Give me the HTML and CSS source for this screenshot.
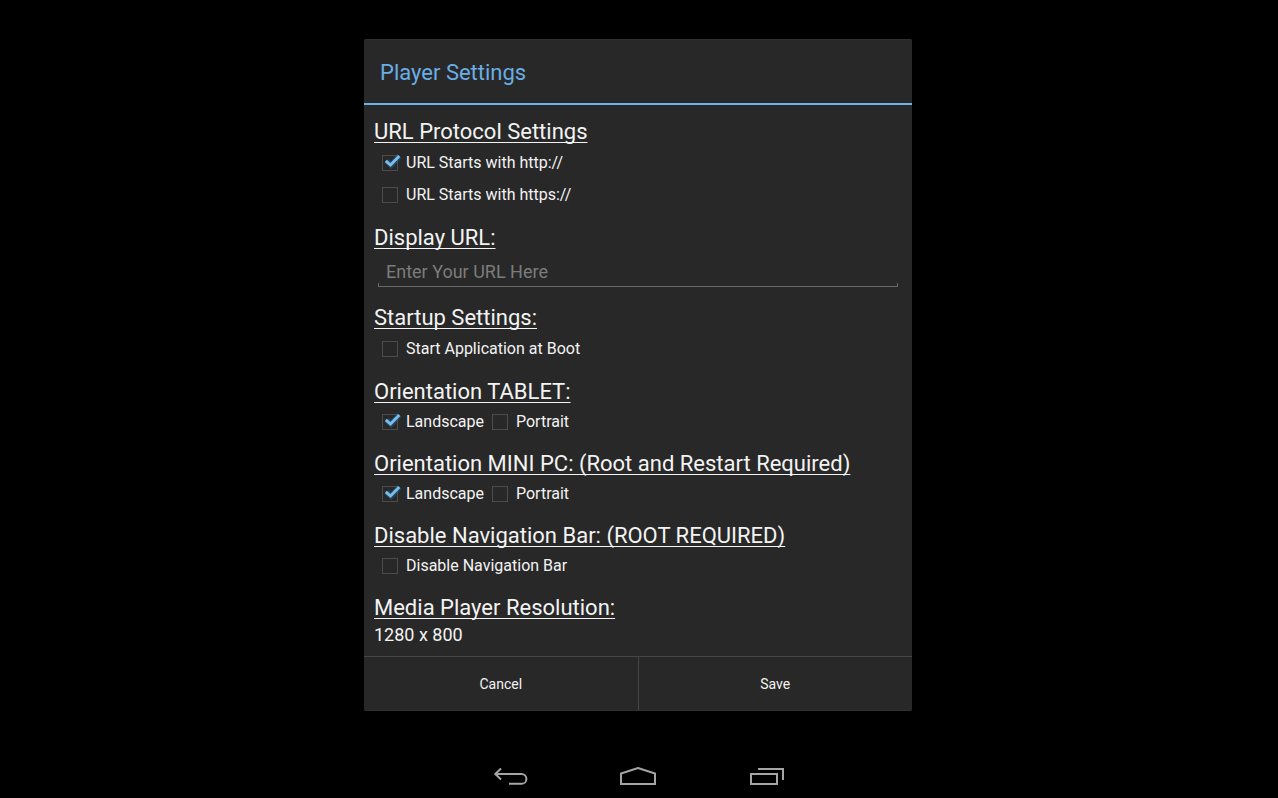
FILE: index.html
```html
<!DOCTYPE html>
<html lang="en">
<head>
<meta charset="utf-8">
<meta name="viewport" content="width=device-width, initial-scale=1">
<title>Player Settings</title>
<link rel="stylesheet" href="styles.css">
</head>
<body>
<svg class="defs" aria-hidden="true">
  <symbol id="tick" viewBox="0 0 22 22">
    <path class="tick-glow" d="M4.500 9 9 13 17.500 4"/>
    <path class="tick-line" d="M3.800 8.800 8.500 13 17.300 4"/>
  </symbol>
</svg>
<main class="stage">
  <form class="dialog" role="dialog" aria-labelledby="dialog-title">
    <header class="dialog-head"><h1 id="dialog-title" class="title">Player Settings</h1></header>
    <div class="dialog-body">
      <section class="group">
        <h2 class="heading">URL Protocol Settings</h2>
        <div class="checks stacked">
          <label class="check"><span class="box-wrap"><input class="box" type="checkbox" checked><svg class="tick"><use href="#tick"/></svg></span>URL Starts with http://</label>
          <label class="check"><span class="box-wrap"><input class="box" type="checkbox"><svg class="tick"><use href="#tick"/></svg></span>URL Starts with https://</label>
        </div>
      </section>
      <section class="group">
        <h2 class="heading"><label for="url">Display URL:</label></h2>
        <div class="field"><input class="field-input" id="url" type="text" placeholder="Enter Your URL Here"></div>
      </section>
      <section class="group">
        <h2 class="heading">Startup Settings:</h2>
        <div class="checks stacked">
          <label class="check"><span class="box-wrap"><input class="box" type="checkbox"><svg class="tick"><use href="#tick"/></svg></span>Start Application at Boot</label>
        </div>
      </section>
      <section class="group">
        <h2 class="heading">Orientation TABLET:</h2>
        <div class="checks">
          <label class="check"><span class="box-wrap"><input class="box" type="checkbox" checked><svg class="tick"><use href="#tick"/></svg></span>Landscape</label>
          <label class="check"><span class="box-wrap"><input class="box" type="checkbox"><svg class="tick"><use href="#tick"/></svg></span>Portrait</label>
        </div>
      </section>
      <section class="group">
        <h2 class="heading">Orientation MINI PC: (Root and Restart Required)</h2>
        <div class="checks">
          <label class="check"><span class="box-wrap"><input class="box" type="checkbox" checked><svg class="tick"><use href="#tick"/></svg></span>Landscape</label>
          <label class="check"><span class="box-wrap"><input class="box" type="checkbox"><svg class="tick"><use href="#tick"/></svg></span>Portrait</label>
        </div>
      </section>
      <section class="group">
        <h2 class="heading">Disable Navigation Bar: (ROOT REQUIRED)</h2>
        <div class="checks">
          <label class="check"><span class="box-wrap"><input class="box" type="checkbox"><svg class="tick"><use href="#tick"/></svg></span>Disable Navigation Bar</label>
        </div>
      </section>
      <section class="group">
        <h2 class="heading">Media Player Resolution:</h2>
        <p class="value">1280 x 800</p>
      </section>
    </div>
    <footer class="actions">
      <button class="action" type="button">Cancel</button>
      <button class="action" type="button">Save</button>
    </footer>
  </form>
</main>
<nav class="navbar" aria-label="System">
  <button class="nav-btn" type="button" aria-label="Back">
    <svg class="nav-icon" viewBox="0 0 40 24"><path d="M6 7H31.500A4.700 4.700 0 0 1 31.500 16.800H19M11 1.500 5.300 7 11 12.500"/></svg>
  </button>
  <button class="nav-btn" type="button" aria-label="Home">
    <svg class="nav-icon" viewBox="0 0 40 24"><path d="M3 17V6.500L20 1 37 6.500V17Z"/></svg>
  </button>
  <button class="nav-btn" type="button" aria-label="Recent apps">
    <svg class="nav-icon" viewBox="0 0 40 24"><path d="M5 7H31V17H5ZM12 2H37V13"/></svg>
  </button>
</nav>
</body>
</html>
```
FILE: styles.css
```css
* { box-sizing: border-box; }

body {
  margin: 0;
  min-height: 100vh;
  display: flex;
  flex-direction: column;
  background: #000;
  color: #f3f3f3;
  font-family: Roboto, "Liberation Sans", sans-serif;
  font-size: 16px;
}

.defs { position: absolute; width: 0; height: 0; }

.stage {
  flex: 1;
  display: flex;
  justify-content: center;
  align-items: center;
  padding-right: 2px;
}

.dialog {
  width: 100%;
  max-width: 548px;
  background: #282828;
  border: 1px solid #303030;
  border-width: 1px 0;
  border-radius: 2px;
}

.dialog-head {
  padding: 17px 16px 14px;
  border-bottom: 2px solid #6db1e6;
}

.title {
  margin: 0;
  font-size: 22px;
  line-height: 32px;
  font-weight: 400;
  color: #6aaee6;
}

.dialog-body {
  display: flex;
  flex-direction: column;
  gap: 13px;
  padding: 13px 10px 8px;
}

.heading {
  margin: 0;
  font-size: 22px;
  line-height: 28px;
  font-weight: 400;
  text-decoration: underline;
  text-decoration-thickness: 1px;
  text-underline-offset: 3px;
  text-decoration-skip-ink: none;
}

.checks {
  display: flex;
  gap: 8px;
  padding-left: 8px;
}

.check {
  display: flex;
  align-items: center;
  gap: 8px;
  height: 31px;
}

.stacked {
  flex-direction: column;
  gap: 1px;
  padding-top: 1px;
  padding-bottom: 1px;
}

.box-wrap { position: relative; display: flex; }

.box {
  appearance: none;
  width: 16px;
  height: 16px;
  margin: 0;
  border: 1px solid #4c4c4c;
}

.tick {
  position: absolute;
  left: 0;
  top: -3px;
  width: 22px;
  height: 22px;
  fill: none;
  pointer-events: none;
  visibility: hidden;
}

.box:checked + .tick { visibility: visible; }

.tick-glow { stroke: #235a80; stroke-width: 6; opacity: 0.5; }
.tick-line { stroke: #78bcf0; stroke-width: 3; }

.field { padding: 0 4px; height: 39px; }

.field-input {
  width: 100%;
  height: 35px;
  padding: 4px 8px 0;
  border: 0;
  background:
    linear-gradient(#6a6a6a, #6a6a6a) bottom / 100% 1px no-repeat,
    linear-gradient(#6a6a6a, #6a6a6a) left bottom / 1px 4px no-repeat,
    linear-gradient(#6a6a6a, #6a6a6a) right bottom / 1px 4px no-repeat;
  color: #f3f3f3;
  font: inherit;
  font-size: 18px;
  outline: 0;
}

.field-input::placeholder { color: #7c7c7c; }

.value { margin: 0; font-size: 18px; line-height: 26px; }

.actions { display: flex; border-top: 1px solid #464646; }

.action {
  flex: 1;
  height: 53px;
  border: 0;
  background: none;
  color: #f3f3f3;
  font: inherit;
  font-size: 14px;
}

.action + .action { border-left: 1px solid #464646; }

.navbar {
  display: flex;
  justify-content: center;
  gap: 88px;
  height: 48px;
  padding-right: 2px;
}

.nav-btn {
  display: flex;
  align-items: center;
  padding: 10px 0 0;
  border: 0;
  background: none;
}

.nav-icon {
  width: 40px;
  height: 24px;
  fill: none;
  stroke: #a5a5a5;
  stroke-width: 2;
}
```
